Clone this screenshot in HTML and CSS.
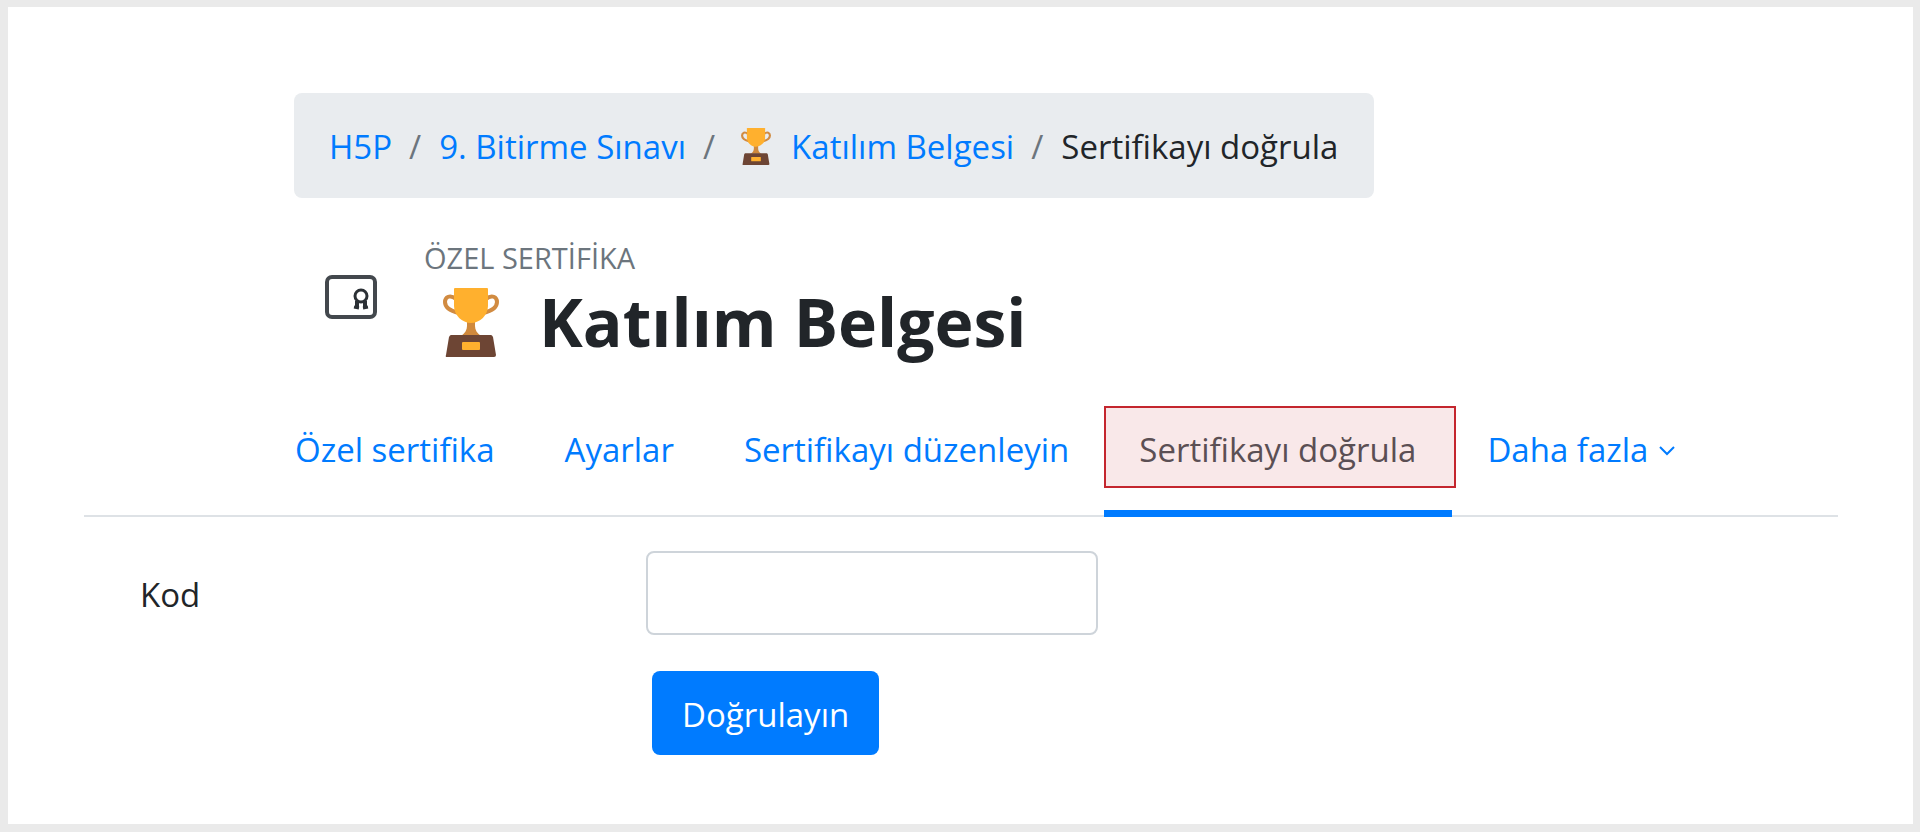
FILE: index.html
```html
<!DOCTYPE html>
<html lang="tr">
<head>
  <meta charset="utf-8">
  <title>Sertifikayı doğrula</title>
  <link rel="stylesheet" href="styles.css">
</head>
<body>
  <!-- trophy used in the breadcrumb and in the title -->
  <svg class="symbols" aria-hidden="true">
    <symbol id="trophy" viewBox="0 0 56 69">
      <path d="M13 11C7 6 2 9 2 14c0 5 5 9 14 11M43 11c6-5 11-2 11 3 0 5-5 9-14 11" fill="none" stroke="#d18b41" stroke-width="4"/>
      <path d="M24 33h8v5c0 4 2 7 6 10H18c4-3 6-6 6-10z" fill="#d0893c"/>
      <path d="M12 0h32q1 0 1 1v17c0 9-8 17-17 17S11 27 11 18V1q0-1 1-1z" fill="#ffb02e"/>
      <path d="M8 47h40q1 0 2 2l3 18q0 2-2 2H4q-2 0-1-2l3-18q1-2 2-2z" fill="#6d4534"/>
      <rect x="19" y="54" width="18" height="8" rx="1" fill="#ffb02e"/>
    </symbol>
  </svg>

  <main class="page">
    <ol class="breadcrumb">
      <li><a href="#">H5P</a></li>
      <li><a href="#">9. Bitirme Sınavı</a></li>
      <li><a href="#"><svg class="trophy"><use href="#trophy"/></svg>Katılım Belgesi</a></li>
      <li>Sertifikayı doğrula</li>
    </ol>

    <header class="page-header">
      <svg class="module-icon" viewBox="0 0 52 44" fill="none" stroke="#43484d">
        <rect x="2" y="2" width="48" height="40" rx="5" stroke-width="4"/>
        <g stroke="#2b3035">
          <circle cx="36" cy="21" r="6" stroke-width="3"/>
          <path d="M32 26v7M40 26v7" stroke-width="4"/>
          <path d="M29 32l5 1M43 32l-5 1" stroke-width="3"/>
        </g>
      </svg>
      <div>
        <div class="module-name">ÖZEL SERTİFİKA</div>
        <h1><svg class="trophy"><use href="#trophy"/></svg>Katılım Belgesi</h1>
      </div>
    </header>

    <nav class="tabs">
      <a href="#">Özel sertifika</a>
      <a href="#">Ayarlar</a>
      <a href="#">Sertifikayı düzenleyin</a>
      <a href="#" class="active"><span class="highlight">Sertifikayı doğrula</span></a>
      <a href="#">Daha fazla<svg class="chevron" viewBox="0 0 18 11"><path d="M2 2l7 7 7-7" fill="none" stroke="currentColor" stroke-width="2"/></svg></a>
    </nav>

    <form class="verify-form">
      <label for="code">Kod</label>
      <input type="text" id="code">
      <button type="button">Doğrulayın</button>
    </form>
  </main>
</body>
</html>
```

FILE: styles.css
```css
* {
  box-sizing: border-box;
}

body {
  margin: 0;
  font-family: "Open Sans", sans-serif;
  font-size: 33px;
  line-height: 50px;
  color: #212529;
}

a {
  color: #007bff;
  text-decoration: none;
}

.symbols {
  position: absolute;
  width: 0;
  height: 0;
}

.page {
  min-height: 100vh;
  padding: 86px 75px 60px 76px;
  border: solid #eaeaea;
  border-width: 7px 7px 8px 8px;
  background: #fff;
}

.breadcrumb {
  display: flex;
  width: fit-content;
  margin: 0 0 0 210px;
  padding: 29px 36px 26px 35px;
  list-style: none;
  border-radius: 8px;
  background: #e9ecef;
}

.breadcrumb li + li::before {
  content: "/";
  padding: 0 18px 0 17px;
  color: #6c757d;
}

.breadcrumb .trophy {
  width: 30px;
  height: 37px;
  margin: 0 20px 0 8px;
  vertical-align: -6px;
}

.page-header {
  display: flex;
  align-items: center;
  gap: 47px;
  margin: 36px 0 0 241px;
}

.module-icon {
  width: 52px;
  height: 44px;
}

.module-name {
  font-size: 29px;
  line-height: 48px;
  color: #6c757d;
}

h1 {
  margin: 0;
  font-size: 66px;
  line-height: 78px;
}

h1 .trophy {
  width: 56px;
  height: 69px;
  margin: 0 40px 0 19px;
  vertical-align: -10px;
}

.tabs {
  display: flex;
  margin-top: 46px;
  padding-left: 176px;
  border-bottom: 2px solid #dee2e6;
}

.tabs a {
  padding: 19px 35px 40px;
}

.tabs .active {
  margin-bottom: -2px;
  padding: 0 0 20px;
  border-bottom: 7px solid #007bff;
}

.highlight {
  display: block;
  margin-right: -4px;
  padding: 17px 38px 11px 33px;
  border: 2px solid #c4262e;
  background: #f9e8e9;
  color: #5b4f54;
}

.chevron {
  width: 18px;
  height: 11px;
  margin-left: 10px;
  vertical-align: 6px;
}

.verify-form {
  display: grid;
  grid-template-columns: 506px 452px;
  row-gap: 36px;
  align-items: center;
  margin: 34px 0 0 56px;
}

.verify-form label {
  padding-top: 4px;
}

.verify-form input {
  height: 84px;
  padding: 12px 24px;
  border: 2px solid #ced4da;
  border-radius: 8px;
  font: inherit;
}

.verify-form button {
  grid-column: 2;
  justify-self: start;
  height: 84px;
  margin-left: 6px;
  padding: 4px 30px 0;
  border: 0;
  border-radius: 8px;
  background: #007bff;
  color: #fff;
  font: inherit;
}
```
